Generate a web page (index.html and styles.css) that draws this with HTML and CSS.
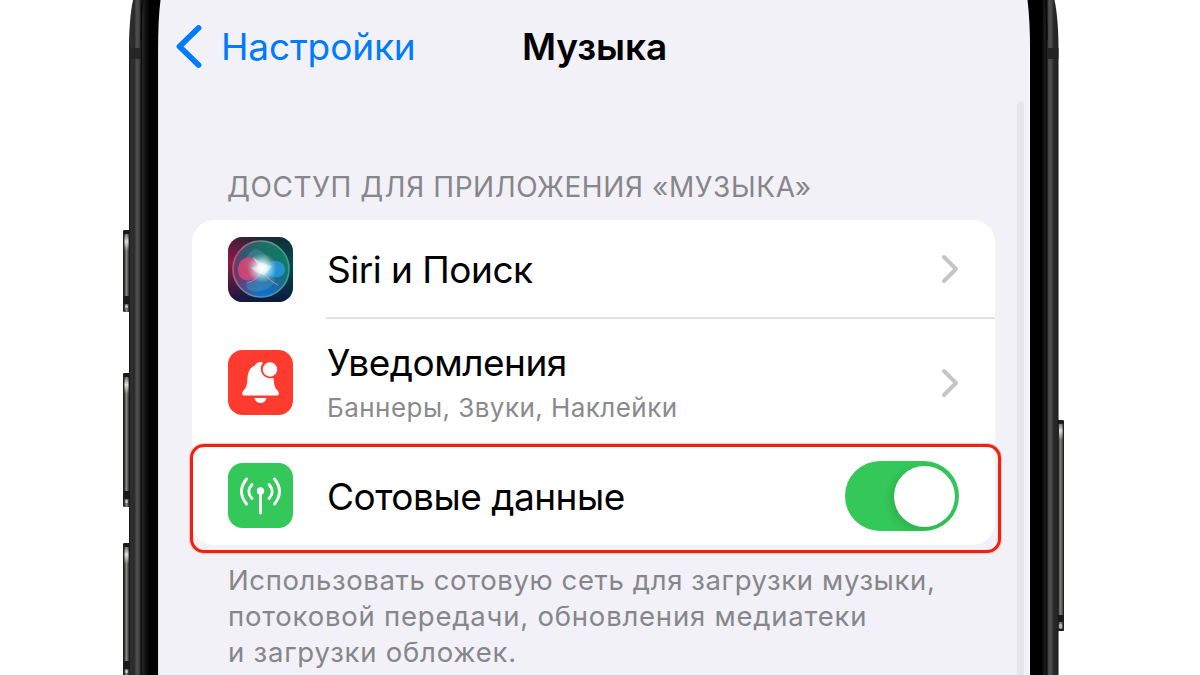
FILE: index.html
```
<!DOCTYPE html>
<html lang="ru">
  <head>
    <meta charset="UTF-8" />
    <meta name="viewport" content="width=device-width, initial-scale=1.0" />
    <title>Музыка</title>
    <link rel="stylesheet" href="styles.css">
  </head>
  <body>
    <div class="phone">
      <svg class="side" width="158" height="675" viewBox="0 0 158 675">
        <defs>
          <linearGradient id="steelL" gradientUnits="userSpaceOnUse" x1="129" y1="0" x2="158" y2="0">
            <stop offset="0" stop-color="#111" />
            <stop offset=".06" stop-color="#303030" />
            <stop offset=".18" stop-color="#292929" />
            <stop offset=".25" stop-color="#4b4b4b" />
            <stop offset=".34" stop-color="#484848" />
            <stop offset=".38" stop-color="#303030" />
            <stop offset=".42" stop-color="#080808" />
            <stop offset=".47" stop-color="#252525" />
            <stop offset=".56" stop-color="#121212" />
            <stop offset=".7" stop-color="#000" />
            <stop offset="1" stop-color="#000" />
          </linearGradient>
          <linearGradient id="button" gradientUnits="userSpaceOnUse" x1="123" y1="0" x2="129" y2="0">
            <stop offset="0" stop-color="#111" />
            <stop offset=".25" stop-color="#383838" />
            <stop offset=".6" stop-color="#8a8a84" />
            <stop offset="1" stop-color="#2a2a2a" />
          </linearGradient>
          <linearGradient id="shine" x1="0" y1="0" x2="0" y2="1">
            <stop offset="0" stop-color="#d8d8d2" stop-opacity="0" />
            <stop offset=".45" stop-color="#e2e2dc" />
            <stop offset="1" stop-color="#d8d8d2" stop-opacity="0" />
          </linearGradient>
        </defs>
        <g fill="url(#button)">
          <rect x="123" y="230" width="8" height="82" rx="1.5" />
          <rect x="123" y="373" width="8" height="134" rx="1.5" />
          <rect x="123" y="543" width="8" height="140" rx="1.5" />
        </g>
        <g fill="#1a1a1a">
          <path d="M123 232q0-2 2-2h5v4h-7zM123 375q0-2 2-2h5v4h-7zM123 545q0-2 2-2h5v4h-7z" />
          <path d="M123 296h6v8h-6zM123 491h6v8h-6zM123 661h6v8h-6z" />
        </g>
        <g fill="url(#shine)">
          <rect x="124.500" y="234" width="4" height="17" />
          <rect x="124.500" y="377" width="4" height="17" />
          <rect x="124.500" y="547" width="4" height="17" />
        </g>
        <g fill="#c8c8c4">
          <circle cx="126.500" cy="306.500" r="1.500" />
          <circle cx="126.500" cy="501.500" r="1.500" />
          <circle cx="126.500" cy="671.500" r="1.500" />
        </g>
        <path fill="url(#steelL)" d="M133 0Q129 18 129 52V675H158V0Z" />
        <path fill="none" stroke="#080808" d="M143 0Q141 16 141 40" />
        <path fill="#262626" d="M129 48h11v11h-11z" />
      </svg>

      <div class="screen">
        <header class="nav">
          <a class="back">
            <svg width="27" height="44" viewBox="0 0 27 44">
              <path d="M22.500 3 3.500 21.500 22.500 40" fill="none" stroke="#007aff" stroke-width="5.800" stroke-linecap="round" stroke-linejoin="round" />
            </svg>
            <span class="back-label">Настройки</span>
          </a>
          <h1 class="title">Музыка</h1>
        </header>

        <main class="content">
          <h2 class="group-title">ДОСТУП ДЛЯ ПРИЛОЖЕНИЯ «МУЗЫКА»</h2>

          <div class="card">
            <div class="row">
              <svg class="icon" viewBox="0 0 65 65">
                <defs>
                  <linearGradient id="siriBg" x1="0" y1=".4" x2="1" y2=".5">
                    <stop offset="0" stop-color="#95184a" />
                    <stop offset=".45" stop-color="#32364a" />
                    <stop offset="1" stop-color="#064b4a" />
                  </linearGradient>
                  <linearGradient id="siriShade" x1="0" y1="0" x2="0" y2="1">
                    <stop offset="0" stop-color="#071a22" stop-opacity=".5" />
                    <stop offset=".4" stop-color="#071a22" stop-opacity="0" />
                    <stop offset="1" stop-color="#0c1046" stop-opacity=".85" />
                  </linearGradient>
                  <linearGradient id="siriOrb" x1="0" y1=".8" x2=".9" y2=".2">
                    <stop offset="0" stop-color="#8c2a68" />
                    <stop offset=".5" stop-color="#2f5a70" />
                    <stop offset="1" stop-color="#0d7f62" />
                  </linearGradient>
                  <linearGradient id="siriRing" x1="0" y1=".2" x2="1" y2=".6">
                    <stop offset="0" stop-color="#d3466f" />
                    <stop offset=".5" stop-color="#5f9a8c" />
                    <stop offset="1" stop-color="#2f9fa4" />
                  </linearGradient>
                  <radialGradient id="siriBlue" cx=".55" cy="1" r=".6">
                    <stop offset="0" stop-color="#0d74d9" />
                    <stop offset="1" stop-color="#0d74d9" stop-opacity="0" />
                  </radialGradient>
                  <radialGradient id="siriGlow">
                    <stop offset="0" stop-color="#fff" />
                    <stop offset=".28" stop-color="#f0ffff" stop-opacity=".9" />
                    <stop offset="1" stop-color="#a5ecea" stop-opacity="0" />
                  </radialGradient>
                </defs>
                <rect width="65" height="65" rx="14.500" fill="url(#siriBg)" />
                <rect width="65" height="65" rx="14.500" fill="url(#siriShade)" />
                <circle cx="33" cy="32" r="28" fill="url(#siriOrb)" />
                <circle cx="33" cy="32" r="28" fill="url(#siriBlue)" />
                <path d="M16 30Q20 9 31 13T45 37Q51 48 36 53T18 48Q31 42 34 32Z" fill="#58b4c0" opacity=".3" />
                <path d="M34 32C28 15 11 18 10 32S27 49 34 32Z" fill="#ef4678" opacity=".75" />
                <path d="M34 32C42 20 56 23 57 32S43 45 34 32Z" fill="#279be7" opacity=".8" />
                <path d="M19 46Q29 44 34 32Q38 42 50 48Q38 42 34 32Q32 42 19 46Z" fill="#e5a9cb" stroke="#d693bc" stroke-width=".8" opacity=".7" />
                <circle cx="34" cy="31" r="15" fill="url(#siriGlow)" />
                <path d="M25 20 35 27 44 29 40 34 36 38 28 35 23 31 30 29Z" fill="#fff" opacity=".45" />
                <circle cx="33" cy="32" r="28" fill="none" stroke="url(#siriRing)" stroke-width="1.600" />
              </svg>
              <div class="text">
                <span class="label">Siri и Поиск</span>
              </div>
              <svg class="chevron" viewBox="0 0 18 30">
                <path d="M3 3 15 15 3 27" />
              </svg>
            </div>

            <div class="row row-tall">
              <svg class="icon" viewBox="0 0 65 65">
                <rect width="65" height="65" rx="14.500" fill="#ff3b30" />
                <path fill="#fff" d="M16.500 45.500C13.500 45.500 13.500 42.500 15.500 40.500C19 37 19 34 19.500 28C20 20.500 23 17 27 15.500C28 12.500 32 11 35 12.500C31.500 17 32.500 23 36 26C39 28.500 42.500 28.500 45.500 28C46 34 46.500 37.500 49.500 40.500C51.500 42.500 51.500 45.500 48.500 45.500Z" />
                <circle cx="42" cy="19.500" r="7.200" fill="#fff" />
                <path fill="#fff" d="M26.500 48h12c-.8 3.200-3 5-6 5s-5.200-1.800-6-5Z" />
              </svg>
              <div class="text">
                <span class="label">Уведомления</span>
                <span class="sub">Баннеры, Звуки, Наклейки</span>
              </div>
              <svg class="chevron" viewBox="0 0 18 30">
                <path d="M3 3 15 15 3 27" />
              </svg>
            </div>

            <div class="row row-marked">
              <svg class="icon" viewBox="0 0 65 65">
                <rect width="65" height="65" rx="14.500" fill="#34c759" />
                <g fill="none" stroke="#fff" stroke-width="2.900" stroke-linecap="round">
                  <path d="M18.500 16Q8.500 28.500 18.500 41" />
                  <path d="M24 21.500Q17.500 28.500 24 35.500" />
                  <path d="M41 21.500Q47.500 28.500 41 35.500" />
                  <path d="M46.500 16Q56.500 28.500 46.500 41" />
                  <path d="M32.500 29V50" />
                </g>
                <circle cx="32.500" cy="28" r="3.700" fill="#fff" />
              </svg>
              <div class="text">
                <span class="label">Сотовые данные</span>
              </div>
              <div class="toggle"><div class="knob"></div></div>
              <div class="marker"></div>
            </div>
          </div>

          <p class="note">
            Использовать сотовую сеть для загрузки музыки,<br />
            <span class="note-rest">потоковой передачи, обновления медиатеки<br />
            и загрузки обложек.</span>
          </p>
        </main>
        <div class="scrollbar"></div>
      </div>

      <svg class="side" width="170" height="675" viewBox="1030 0 170 675">
        <defs>
          <linearGradient id="steelR" gradientUnits="userSpaceOnUse" x1="1030" y1="0" x2="1058.500" y2="0">
            <stop offset="0" stop-color="#000" />
            <stop offset=".42" stop-color="#000" />
            <stop offset=".53" stop-color="#202020" />
            <stop offset=".58" stop-color="#0a0a0a" />
            <stop offset=".61" stop-color="#222" />
            <stop offset=".66" stop-color="#505050" />
            <stop offset=".76" stop-color="#484848" />
            <stop offset=".84" stop-color="#262626" />
            <stop offset=".95" stop-color="#242824" />
            <stop offset="1" stop-color="#111" />
          </linearGradient>
          <linearGradient id="power" x1="0" y1="0" x2="1" y2="0">
            <stop offset="0" stop-color="#222" />
            <stop offset=".5" stop-color="#7b7c78" />
            <stop offset=".75" stop-color="#555" />
            <stop offset="1" stop-color="#0c0c0c" />
          </linearGradient>
        </defs>
        <rect x="1057" y="420" width="7" height="211" rx="1.500" fill="url(#power)" />
        <path fill="#1a1a1a" d="M1057 420h5q2 0 2 2v2h-7zM1058 615h6v7h-6zM1058 629h5.500v2h-5.500z" />
        <rect x="1059" y="423" width="3.500" height="17" fill="url(#shine)" />
        <ellipse cx="1060.500" cy="626" rx="1.800" ry="2.500" fill="#b2b2ad" />
        <path fill="url(#steelR)" d="M1027 0H1054.500Q1058.500 18 1058.500 52V675H1030V52Z" />
        <path fill="none" stroke="#080808" d="M1045 0Q1047 16 1047 40" />
        <path fill="#242424" d="M1048 48h10.500v11h-10.500z" />
      </svg>
      <svg class="corners" width="872" height="60" viewBox="0 0 872 60">
        <path d="M0 0H2.500Q0 20 0 50ZM872 0H869.500Q872 20 872 50Z" />
      </svg>
    </div>
  </body>
</html>
```
FILE: styles.css
```
* {
  margin: 0;
  padding: 0;
  box-sizing: border-box;
}
body {
  height: 675px;
  overflow: hidden;
  background: #fff;
  font-family: Inter, "Liberation Sans", sans-serif;
}
.phone {
  position: relative;
  display: flex;
  width: 1200px;
  height: 675px;
}
.side {
  display: block;
  flex: none;
}
.corners {
  position: absolute;
  left: 158px;
  top: 0;
}
.screen {
  position: relative;
  width: 872px;
  height: 675px;
  background: #f2f1f7;
  border-left: 1px solid #dddcdf;
  border-right: 1px solid #fff;
}
.scrollbar {
  position: absolute;
  top: 102px;
  right: 5px;
  width: 7px;
  height: 600px;
  border-radius: 4px 4px 0 0;
  background: #e5e5eb;
}
.nav {
  display: flex;
  align-items: center;
  height: 94px;
  padding-left: 17px;
}
.back {
  display: flex;
  align-items: center;
  width: 346px;
  gap: 18px;
  color: #007aff;
  font-size: 37px;
  white-space: nowrap;
}
.back-label {
  padding-bottom: 2px;
  letter-spacing: -0.15px;
}
.title {
  font-size: 37px;
  font-weight: 600;
  line-height: 44px;
  letter-spacing: -0.1px;
}
.content {
  padding: 76px 34px 0 33px;
}
.group-title {
  height: 50px;
  padding-left: 35px;
  font-size: 28px;
  font-weight: 400;
  line-height: 34px;
  letter-spacing: 0.6px;
  color: #86868b;
  white-space: nowrap;
}
.card {
  height: 325px;
  border-radius: 22px;
  background: #fff;
}
.row {
  position: relative;
  display: flex;
  align-items: center;
  height: 98px;
  padding: 0 36px;
}
.row-tall {
  height: 129px;
}
/* separator starts under the label, not under the icon */
.row-tall::before {
  content: "";
  position: absolute;
  top: -1px;
  left: 134px;
  right: 0;
  height: 2px;
  background: #e1e1e3;
}
.icon {
  width: 65px;
  height: 65px;
  flex: none;
}
.row-marked .icon {
  margin-bottom: 2px;
}
.text {
  display: flex;
  flex: 1;
  flex-direction: column;
  padding-left: 34px;
  white-space: nowrap;
}
.row:not(.row-tall) .text {
  padding-top: 2px;
}
.label {
  font-size: 37px;
  line-height: 46px;
  letter-spacing: -0.5px;
}
.sub {
  font-size: 26px;
  line-height: 36px;
  margin-top: 4px;
  letter-spacing: 0.45px;
  color: #8a8a8d;
}
.chevron {
  width: 18px;
  height: 30px;
  fill: none;
  stroke: #c5c5c8;
  stroke-width: 4;
  stroke-linecap: round;
  stroke-linejoin: round;
}
.toggle {
  width: 114px;
  height: 70px;
  padding: 5px 4px 4px 49px;
  border-radius: 35px;
  background: #34c759;
}
.knob {
  width: 61px;
  height: 61px;
  border-radius: 50%;
  background: #fff;
  box-shadow: -3px 3px 10px #0002;
}
.marker {
  position: absolute;
  top: -3px;
  left: -2px;
  right: -6px;
  height: 109px;
  border: 3px solid #f4200d;
  border-radius: 14px;
  box-shadow: 0 0 1px 1px #8886, inset 0 0 1px #8888;
}
.note {
  padding: 17px 0 0 36px;
  font-size: 27.5px;
  line-height: 36px;
  letter-spacing: 0.62px;
  color: #86868b;
  white-space: nowrap;
}
.note-rest {
  letter-spacing: 0.78px;
}
```
